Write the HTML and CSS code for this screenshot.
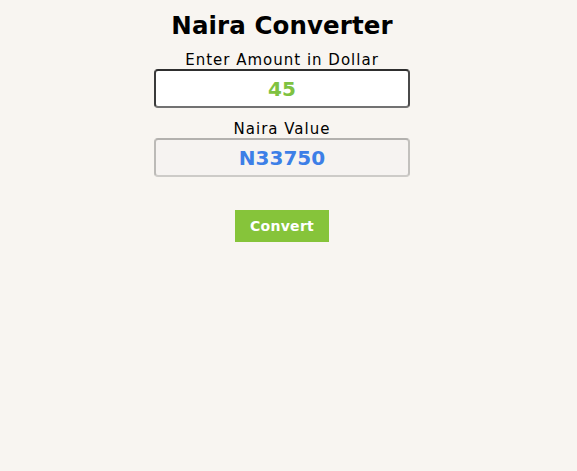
FILE: index.html
```html
<!DOCTYPE html>
<html lang="en">
<head>
<meta charset="utf-8">
<title>Naira Converter</title>
<link rel="stylesheet" href="styles.css">
</head>
<body>
<main class="converter">
  <h1 class="title">Naira Converter</h1>
  <label class="label" for="dollar">Enter Amount in Dollar</label>
  <input class="field field-amount" id="dollar" type="text" value="45">
  <label class="label label-second" for="naira">Naira Value</label>
  <input class="field field-result" id="naira" type="text" value="N33750" readonly>
  <button class="convert" type="button">Convert</button>
</main>
</body>
</html>
```

FILE: styles.css
```css
html, body {
  margin: 0;
  padding: 0;
  background: #f8f5f1;
}
body {
  font-family: "DejaVu Sans", Verdana, sans-serif;
  color: #000;
}
.converter {
  display: flex;
  flex-direction: column;
  align-items: center;
  padding-right: 13px;
}
.title {
  margin: 12px 0 0;
  font-size: 24.5px;
  line-height: 28px;
  font-weight: bold;
  letter-spacing: 0.1px;
}
.label {
  margin-top: 11px;
  font-size: 15px;
  line-height: 18px;
  letter-spacing: 1px;
}
.label-second {
  margin-top: 12px;
}
.field {
  box-sizing: border-box;
  width: 256px;
  height: 39px;
  margin: 0;
  border-radius: 4px;
  border-style: solid;
  border-width: 2px;
  text-align: center;
  font-family: "DejaVu Sans", Verdana, sans-serif;
  font-size: 20px;
  font-weight: bold;
  padding: 0 6px;
  outline: none;
}
.field-amount {
  background: #ffffff;
  color: #7fc241;
  border-color: #2e2e2e #4a4a4a #727272 #3a3a3a;
}
.field-result {
  background: #f6f3f1;
  color: #3d7fe7;
  border-color: #b3b1ae #c2c0bd #cdcbc8 #bcbab7;
}
.convert {
  margin-top: 33px;
  width: 94px;
  height: 32px;
  border: none;
  border-radius: 0;
  background: #86c43a;
  color: #fff;
  font-family: "DejaVu Sans", Verdana, sans-serif;
  font-size: 14px;
  font-weight: bold;
  letter-spacing: 0.3px;
  padding: 0;
}
```
